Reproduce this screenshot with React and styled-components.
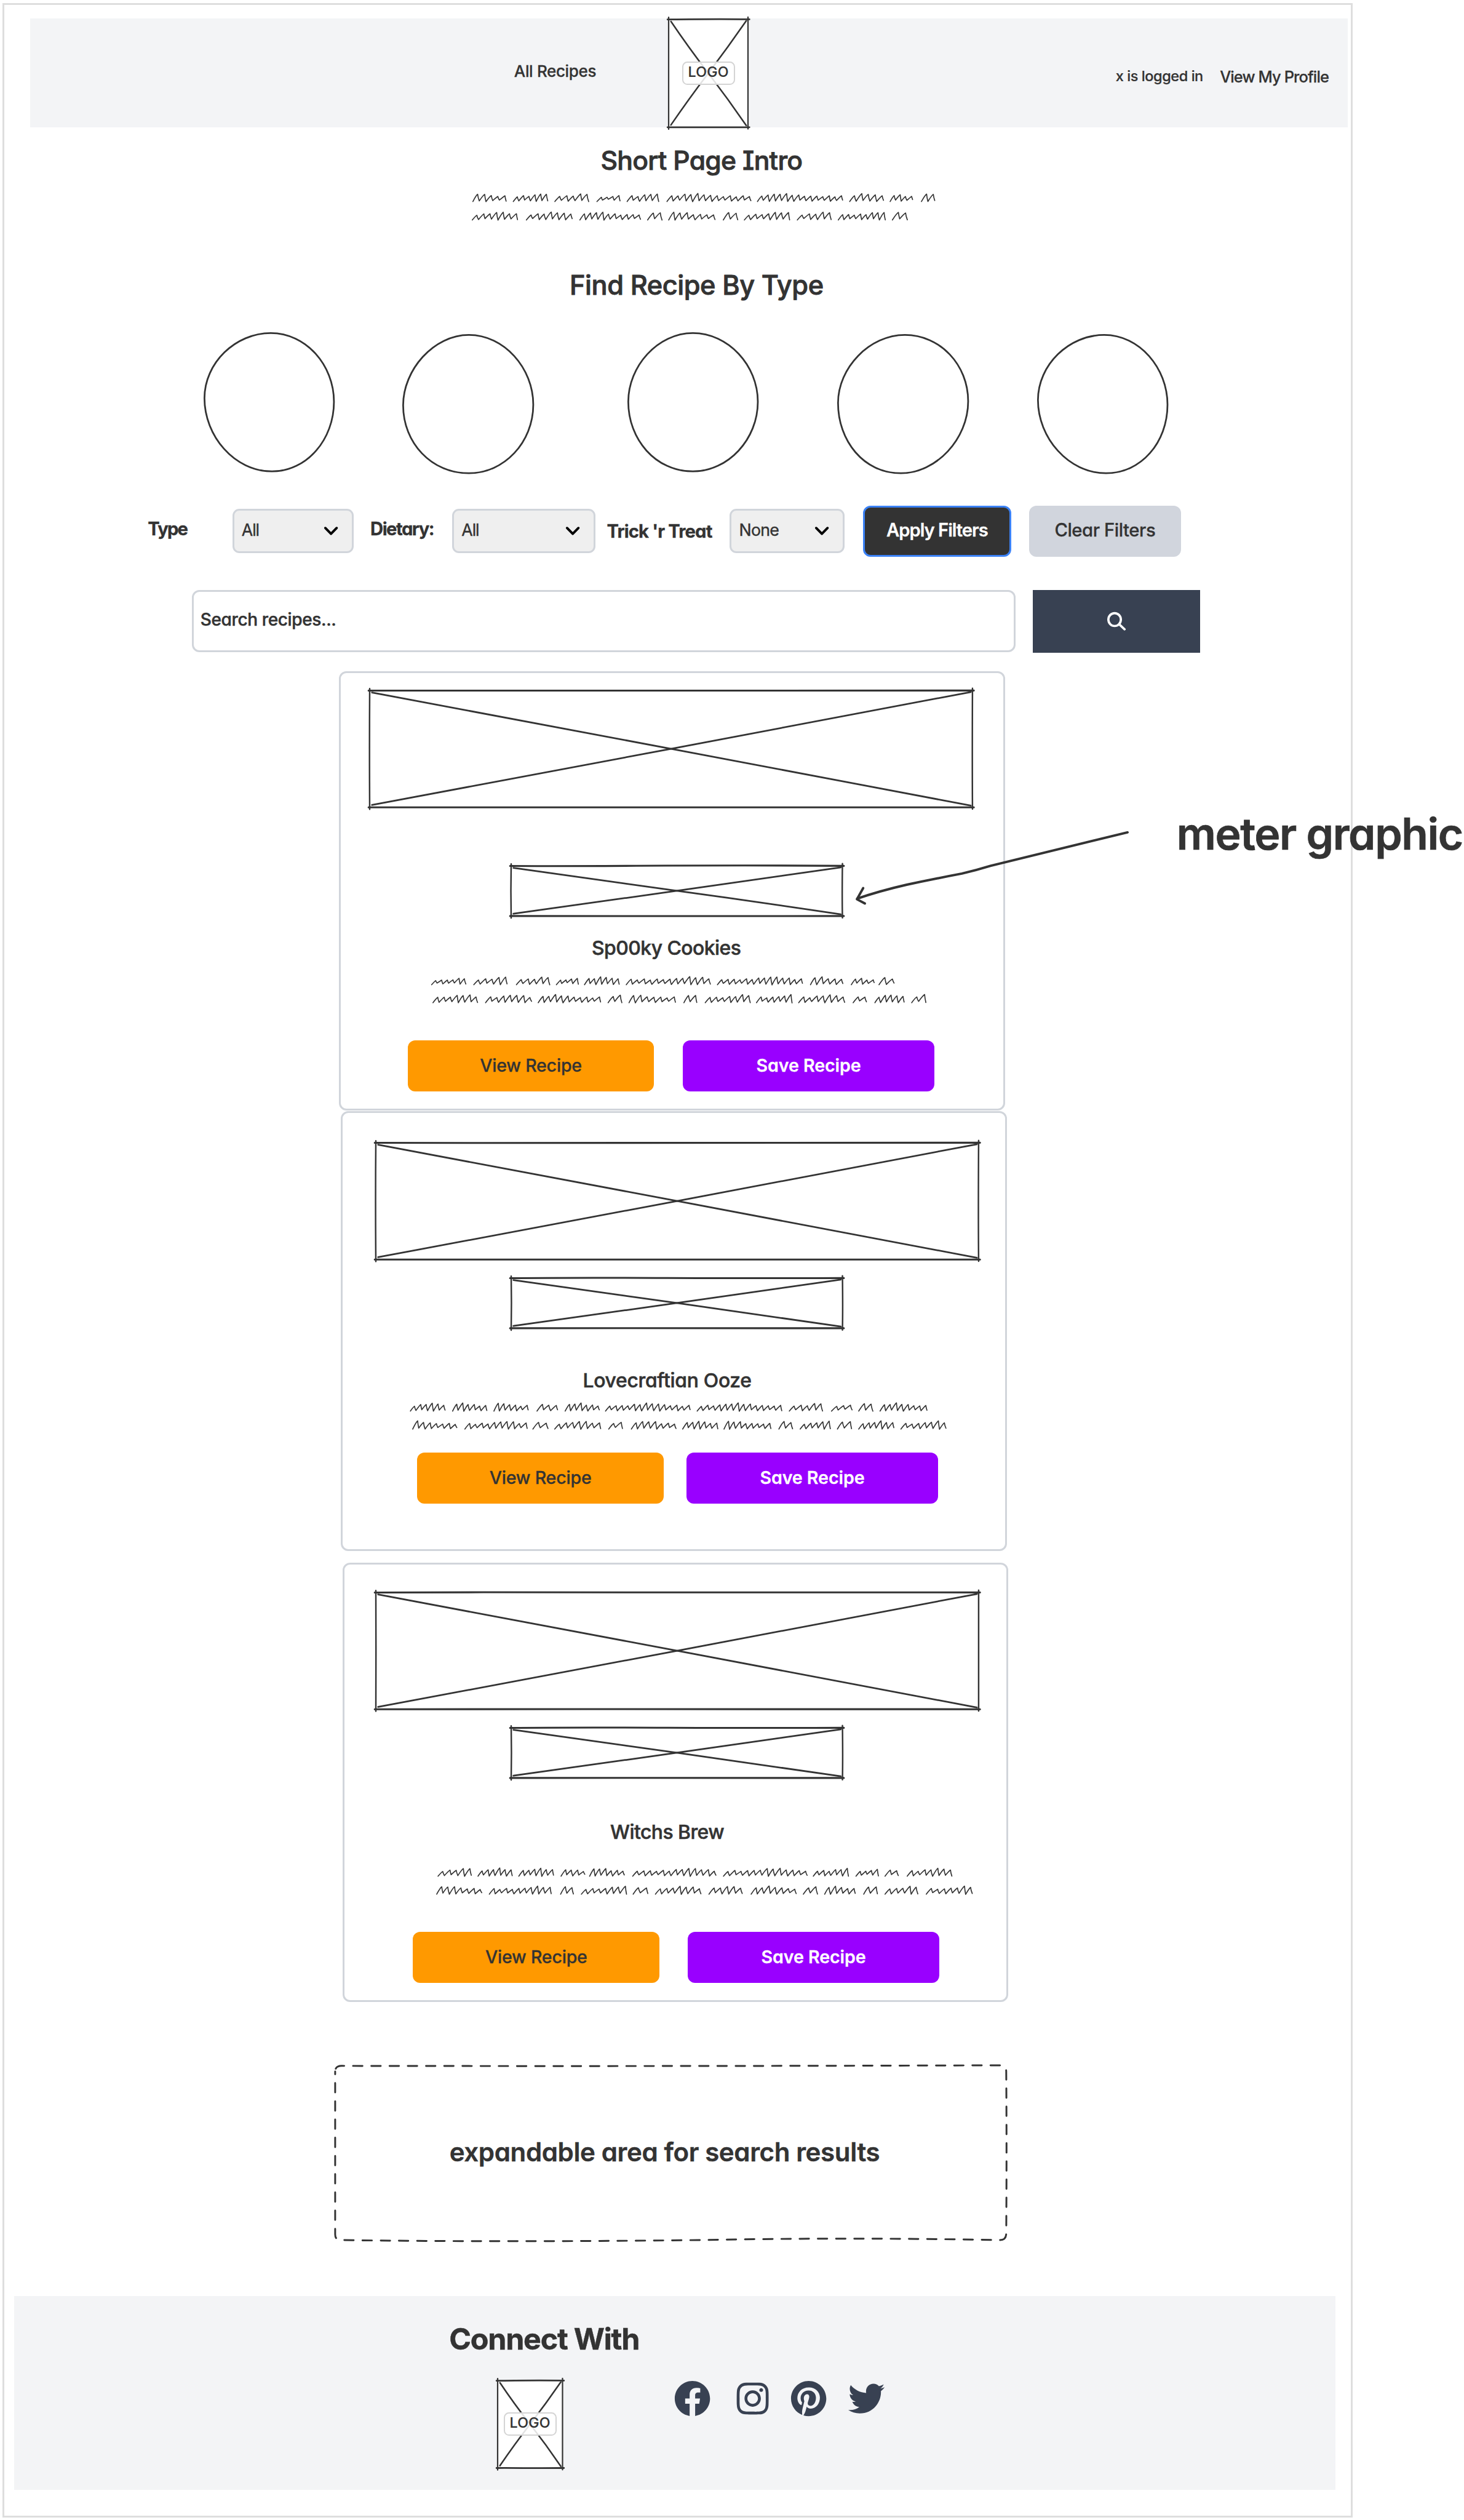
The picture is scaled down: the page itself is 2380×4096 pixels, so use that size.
import React from 'react';
import styled, { createGlobalStyle } from 'styled-components';
import { FaFacebook, FaInstagram, FaPinterest, FaTwitter } from 'react-icons/fa';

const INK = '#333333';
const LINE = '#d1d5db';

// 1rem is ten design units
const GlobalStyle = createGlobalStyle`
  html { font-size: 9.2535px; }
  body { margin: 0; background: #fff; overflow: hidden; }
  *, *::before, *::after { box-sizing: border-box; }
`;

const Page = styled.main`
  position: relative;
  width: 257.2rem;
  height: 442.6rem;
  overflow: hidden;
  padding: 0.5rem 0 0 0.4rem;
  color: ${INK};
  font-family: Inter, "Liberation Sans", sans-serif;
  font-feature-settings: "cv11", "cv08";
`;

const Frame = styled.div`
  width: 237.2rem;
  height: 441.7rem;
  border: 3px solid #dedede;
  display: flex;
  flex-direction: column;
  align-items: flex-start;
`;

const Text = styled.span`
  display: block;
  flex: none;
  white-space: nowrap;
  font-size: ${(p) => p.$size}rem;
  font-weight: ${(p) => p.$weight || 500};
  letter-spacing: ${(p) => p.$track || 0}em;
  line-height: ${(p) => p.$line || 4}rem;
  margin: ${(p) => p.$m || '0'};
  -webkit-text-stroke: ${(p) => p.$swell || 0.01}em currentColor;
`;

/* ---------- header ---------- */

const Header = styled.header`
  flex: none;
  display: grid;
  grid-template-columns: 112.16rem 13.94rem 1fr;
  width: 231.5rem;
  height: 19.05rem;
  margin: 2.45rem 0 0 4.6rem;
  background: #f3f4f6;
`;

const Nav = styled.nav`
  display: flex;
  align-items: flex-start;
  padding: 7.2rem 0 0 85rem;
`;

const Account = styled.div`
  display: flex;
  align-items: flex-start;
  justify-content: flex-end;
  gap: 2.95rem;
  padding: 8.05rem 3.4rem 0 0;
`;

const PlaceholderBox = styled.div`
  position: relative;
  flex: none;
  width: ${(p) => p.$w / 10}rem;
  height: ${(p) => p.$h / 10}rem;
  margin: ${(p) => p.$m || '0'};
`;

const Sketch = styled.svg`
  display: block;
  width: 100%;
  height: 100%;
  overflow: visible;
`;

const Badge = styled.span`
  position: absolute;
  left: 50%;
  top: 50%;
  transform: translate(-50%, -50%);
  display: flex;
  align-items: center;
  justify-content: center;
  width: 9.3rem;
  height: 4.1rem;
  padding-bottom: 0.35rem;
  border: 0.25rem solid #d4d4d4;
  border-radius: 0.9rem;
  background: rgba(255, 255, 255, 0.86);
`;

function Placeholder({ w, h, m, bend = 1, stroke = 3.3, label }) {
  const b = bend * 1.6;
  return (
    <PlaceholderBox $w={w} $h={h} $m={m}>
      <Sketch viewBox={`0 0 ${w} ${h}`} preserveAspectRatio="none" fill="none" stroke={INK} strokeWidth={stroke} strokeLinecap="round">
        <rect x="0" y="0" width={w} height={h} fill="#fff" stroke="none" />
        <path d={`M-2 0.6 C${w * 0.3} ${b} ${w * 0.55} ${-b} ${w + 2.5} 0.4`} />
        <path d={`M-2 ${h} C${w * 0.35} ${h - b * 0.4} ${w * 0.55} ${h + b} ${w + 2.5} ${h}`} />
        <path strokeWidth={stroke * 0.8} d={`M0 -3 Q${-b * 0.6} ${h * 0.5} 0 ${h + 3.5}`} />
        <path strokeWidth={stroke * 0.8} d={`M${w} -3.5 Q${w - b * 0.5} ${h * 0.6} ${w} ${h + 3}`} />
        <path strokeWidth={stroke * 0.9} d={`M4 4 Q${w * 0.25} ${h * 0.25 + 2 + b * 0.2} ${w / 2} ${h / 2} T${w - 3} ${h - 3}`} />
        <path strokeWidth={stroke * 0.9} d={`M4 ${h - 4} Q${w * 0.25} ${h * 0.75 - 1.5 - b * 0.2} ${w / 2} ${h / 2} T${w - 3} 3`} />
      </Sketch>
      {label && (
        <Badge>
          <Text $size={2.5} $track={0.012} $line={3}>{label}</Text>
        </Badge>
      )}
    </PlaceholderBox>
  );
}

/* ---------- scribbled copy ---------- */

// A word is [start, end, peak, height]: peak says where its tall strokes are.
const U = 1.2544;

const SquiggleBox = styled.div`
  flex: none;
  width: ${(p) => p.$w / 10}rem;
  height: 5.4rem;
  margin: ${(p) => p.$m || '0'};
`;

function wordPath([a, b, peak = 0.5, height = 1], base, seed) {
  const x0 = a / U;
  const x1 = b / U;
  const n = Math.max(2, Math.round((x1 - x0) / 11));
  const step = (x1 - x0) / n;
  let d = `M${x0.toFixed(1)} ${base.toFixed(1)}`;
  for (let i = 0; i < n; i += 1) {
    const t = i / (n - 1);
    const near = Math.exp(-(((t - peak) * Math.min(n, 11)) ** 2) / 5);
    const jitter = Math.sin(seed * 7.3 + i * 2.7);
    const tall = (9.2 + 4.2 * near + jitter) * height;
    const px = x0 + step * (i + 0.74 + jitter * 0.04);
    const bx = x0 + step * (i + 0.95);
    const py = base - tall;
    const by = base - 1.6 + near * 0.9 + Math.sin(seed * 3.1 + i * 1.9) * 1.1 - (1 - height) * 6;
    d += ` Q${(px - step * 0.22).toFixed(1)} ${(py + 1.6).toFixed(1)} ${px.toFixed(1)} ${py.toFixed(1)}`;
    d += ` Q${(px + step * 0.05).toFixed(1)} ${((py + by) / 2).toFixed(1)} ${bx.toFixed(1)} ${by.toFixed(1)}`;
  }
  return d;
}

function Squiggle({ lines, start, w, m, pitch = 31.6 }) {
  return (
    <SquiggleBox $w={w} $m={m}>
      <Sketch viewBox={`${start} 0 ${w} 54`} fill="none" stroke={INK} strokeWidth="1.8" strokeLinejoin="round" strokeLinecap="round">
        {lines.map((words, row) =>
          words.map((word, i) => (
            <path key={`${row}-${i}`} d={wordPath(word, 16.8 + row * pitch, i + row * 13 + words.length)} />
          ))
        )}
      </Sketch>
    </SquiggleBox>
  );
}

const toUnits = (words) => words.map(([a, b, ...rest]) => [a * U, b * U, ...rest]);

const INTRO = [
  toUnits([[830, 889, 0], [901, 962, 0.9], [974, 1034, 1], [1048, 1089, 1, 0.75], [1101, 1157, 0.9], [1171, 1319, 0.3], [1330, 1480, 0.25], [1492, 1552, 0.4], [1563, 1603, 0.2, 0.85], [1618, 1642, 0.5]]),
  toUnits([[829, 909, 0.6], [924, 1005, 0.6], [1018, 1125, 0.25], [1137, 1163, 1], [1174, 1256, 0.1], [1270, 1296, 0.3], [1307, 1387, 0.8], [1400, 1460, 0.9], [1472, 1555, 0.9], [1567, 1594, 0.6]]),
];

/* ---------- category circles ---------- */

const Circles = styled.div`
  flex: none;
  display: flex;
  align-items: flex-start;
  height: 25rem;
  margin: 5.15rem 0 0 35rem;
`;

const CircleBox = styled.div`
  flex: none;
  width: ${(p) => p.$w / 10}rem;
  height: 24.6rem;
  margin: ${(p) => p.$drop / 10}rem ${(p) => p.$gap / 10}rem 0 0;
`;

const CIRCLES = [
  { w: 230.5, gap: 118.9, drop: 0, top: 118, right: 122, bottom: 120, left: 116 },
  { w: 231.6, gap: 164.4, drop: 4, top: 117, right: 124, bottom: 117, left: 125 },
  { w: 230.6, gap: 137.4, drop: 0, top: 115, right: 122, bottom: 115, left: 122 },
  { w: 231.6, gap: 120.4, drop: 4, top: 119, right: 118, bottom: 112, left: 121 },
  { w: 230.6, gap: 0, drop: 4, top: 118, right: 124, bottom: 121, left: 116 },
];

function Circle({ w, gap, drop, top, right, bottom, left }) {
  const x1 = w - 1.5;
  const y1 = 244.5;
  const d = `M${top} 1.5 C${top + 62} 1.5 ${x1} ${right - 64} ${x1} ${right} C${x1} ${right + 66} ${bottom + 62} ${y1} ${bottom} ${y1} C${bottom - 66} ${y1} 1.5 ${left + 66} 1.5 ${left} C1.5 ${left - 62} ${top - 62} 1.5 ${top} 1.5 Z`;
  return (
    <CircleBox $w={w} $gap={gap} $drop={drop}>
      <Sketch viewBox={`0 0 ${w} 246`} fill="none" stroke={INK} strokeWidth="3">
        <path d={d} />
      </Sketch>
    </CircleBox>
  );
}

/* ---------- filters and search ---------- */

const Filters = styled.form`
  flex: none;
  display: flex;
  align-items: center;
  height: 8.94rem;
  margin: 5.5rem 0 0 25.25rem;
`;

const FilterLabel = styled.label`
  flex: none;
  width: ${(p) => p.$w / 10}rem;
  margin-left: ${(p) => (p.$gap || 0) / 10}rem;
  padding-bottom: ${(p) => (p.$lift || 0) / 10}rem;
`;

const SelectBox = styled.div`
  flex: none;
  display: flex;
  align-items: center;
  justify-content: space-between;
  width: ${(p) => p.$w / 10}rem;
  height: 7.8rem;
  padding: 0 2.5rem 0 1.3rem;
  border: 3px solid ${LINE};
  border-radius: 1.2rem;
  background: #efefef;
`;

const Chevron = styled.svg`
  display: block;
  width: 2.4rem;
  height: 1.5rem;
  overflow: visible;
`;

function Select({ w, value, track }) {
  return (
    <SelectBox $w={w}>
      <Text $size={2.89} $weight={400} $track={track} $swell={0.016} $m="-0.3rem 0 0">{value}</Text>
      <Chevron viewBox="0 0 24 15" fill="none" stroke="#000" strokeWidth="4.2" strokeLinecap="round" strokeLinejoin="round">
        <path d="M2 2.4 L12 12.6 L22 2.4" />
      </Chevron>
    </SelectBox>
  );
}

const tones = {
  dark: `background: ${INK}; color: #fff; border: 3px solid #3b82f6;`,
  muted: `background: #d1d5dd; color: ${INK}; border: 0;`,
  orange: `background: #ff9900; color: ${INK}; border: 0;`,
  purple: `background: #9900ff; color: #fff; border: 0;`,
};

const Button = styled.button`
  flex: none;
  display: flex;
  align-items: center;
  justify-content: center;
  width: ${(p) => p.$w / 10}rem;
  height: ${(p) => (p.$h || 89) / 10}rem;
  margin: 0 0 0 ${(p) => (p.$gap || 0) / 10}rem;
  padding: 0 0 0.3rem;
  border-radius: 1.3rem;
  font-family: inherit;
  font-feature-settings: inherit;
  ${(p) => tones[p.$tone]}
`;

const SearchRow = styled.form`
  flex: none;
  display: flex;
  gap: 3rem;
  height: 11.05rem;
  margin: 5.9rem 0 0 32.95rem;
`;

const SearchField = styled.div`
  display: flex;
  align-items: center;
  width: 144.75rem;
  height: 10.85rem;
  padding: 0 0 0.35rem 1.2rem;
  border: 3px solid ${LINE};
  border-radius: 1.3rem;
  background: #fff;
`;

const SearchButton = styled.button`
  display: flex;
  align-items: center;
  justify-content: center;
  width: 29.4rem;
  height: 11.05rem;
  padding: 0 0 0 0.2rem;
  border: 0;
  background: #384152;
`;

const SearchGlyph = styled.svg`
  display: block;
  width: 3.3rem;
  height: 3.2rem;
  overflow: visible;
`;

/* ---------- recipe cards ---------- */

const Card = styled.article`
  flex: none;
  display: flex;
  flex-direction: column;
  align-items: flex-start;
  width: 117rem;
  height: 77.25rem;
  margin: ${(p) => p.$m};
  border: 3px solid ${LINE};
  border-radius: 1.3rem;
  background: #fff;
`;

const Actions = styled.div`
  flex: none;
  display: flex;
  gap: ${(p) => p.$gap}rem;
  margin: ${(p) => p.$m};
`;

const RECIPES = [
  {
    title: 'Sp00ky Cookies', track: -0.0159, m: '3.15rem 0 0 58.82rem', start: 18.2, bends: [0.7, 1],
    imageM: '3.1rem 0 0 5.08rem', meterM: '10.2rem 0 0 29.94rem', titleM: '3.6rem 0 0 44.1rem', copyM: '2.8rem 0 0',
    actionsM: '6.1rem 0 0 11.75rem', actionsGap: 5.02,
    lines: [
      [[223, 299, 1, 0.85], [316, 390, 1], [410, 484, 1], [498, 547, 0.9, 0.8], [560, 637, 0.5], [652, 838, 0.8], [853, 1041, 0.65], [1058, 1130, 0.1], [1148, 1199, 0.2, 0.8], [1209, 1243, 0, 0.9]],
      [[226, 325, 0.7], [342, 444, 0.6], [458, 596, 0.25], [612, 643, 1], [658, 761, 0], [779, 808, 0.2], [826, 926, 0.9], [939, 1018, 1], [1032, 1134, 0.65], [1152, 1182, 0.5, 0.8], [1200, 1265, 0.5], [1281, 1313, 1]],
    ],
  },
  {
    title: 'Lovecraftian Ooze', track: -0.0086, m: '0.05rem 0 0 59.2rem', start: 22, bends: [1, -1],
    imageM: '5.25rem 0 0 5.77rem', meterM: '3.2rem 0 0 29.55rem', titleM: '7.1rem 0 0 42.15rem', copyM: '1.75rem 0 0',
    actionsM: '3.6rem 0 0 13.05rem', actionsGap: 3.98,
    lines: [
      [[177, 254, 0.6], [270, 346, 0.2], [361, 437, 0.1], [456, 502, 0.3, 0.85], [518, 594, 0.3], [607, 794, 0.5], [809, 996, 0.45], [1012, 1086, 1], [1105, 1151, 1, 0.8], [1165, 1197, 0.7], [1212, 1316, 0.3]],
      [[182, 280, 0], [297, 435, 0.65], [447, 481, 0.2, 0.9], [495, 597, 0.55], [614, 645, 0.6, 0.85], [664, 763, 0.3], [777, 855, 0.4], [868, 972, 0.1], [989, 1020, 0.2], [1036, 1103, 0.9], [1118, 1150, 0.3], [1165, 1243, 0.6], [1258, 1358, 0.8]],
    ],
  },
  {
    title: 'Witchs Brew', track: -0.0166, m: '2.05rem 0 0 59.42rem', start: 24.5, bends: [-0.5, -1],
    imageM: '4.92rem 0 0 5.52rem', meterM: '3.23rem 0 0 29.3rem', titleM: '7.5rem 0 0 46.75rem', copyM: '4.05rem 0 0',
    actionsM: '6.1rem 0 0 12.1rem', actionsGap: 4.94,
    lines: [
      [[237, 311, 0.9], [325, 401, 0.6], [415, 492, 0.6], [508, 561, 0.3, 0.85], [571, 648, 0.2], [666, 850, 0.7], [866, 1051, 0.6], [1064, 1142, 1], [1158, 1208, 1, 0.85], [1222, 1252, 0.6, 0.8], [1271, 1370, 0.7]],
      [[234, 334, 0.2], [350, 487, 0.8], [507, 536, 0.2], [553, 653, 0.9], [667, 700, 0, 0.9], [716, 817, 0.6], [834, 908, 0.6], [927, 1027, 0.35], [1042, 1074, 1], [1089, 1157, 0.2], [1175, 1206, 0.2], [1222, 1295, 0.9], [1313, 1415, 0.9]],
    ],
  },
];

function RecipeCard({ r }) {
  return (
    <Card $m={r.m}>
      <Placeholder w={1059} h={205.5} m={r.imageM} bend={r.bends[0]} />
      <Placeholder w={582} h={88.5} m={r.meterM} bend={r.bends[1]} />
      <Text as="h3" $size={3.44} $swell={0.018} $track={r.track} $m={r.titleM}>{r.title}</Text>
      <Squiggle lines={r.lines} start={r.start} w={1160} m={r.copyM} />
      <Actions $m={r.actionsM} $gap={r.actionsGap}>
        <Button type="button" $tone="orange" $w={433}>
          <Text $size={3.09} $track={-0.0075}>View Recipe</Text>
        </Button>
        <Button type="button" $tone="purple" $w={442.5}>
          <Text $size={3.09} $weight={600} $track={-0.0021}>Save Recipe</Text>
        </Button>
      </Actions>
    </Card>
  );
}

/* ---------- results area, footer, note ---------- */

const Results = styled.section`
  position: relative;
  flex: none;
  display: flex;
  align-items: center;
  width: 118.3rem;
  height: 31rem;
  margin: 11rem 0 0 58rem;
  padding: 0 0 0.5rem 20.25rem;
`;

const DashedOutline = styled.svg`
  position: absolute;
  inset: 0;
  width: 100%;
  height: 100%;
  overflow: visible;
`;

const Footer = styled.footer`
  flex: none;
  width: 232.1rem;
  height: 34.05rem;
  margin: 9.65rem 0 0 1.8rem;
  padding: 4.45rem 0 0;
  background: #f3f4f6;
`;

const FooterRow = styled.div`
  display: flex;
  align-items: flex-start;
  padding: 4.3rem 0 0 84.9rem;
`;

const Socials = styled.div`
  display: flex;
  margin-left: 19.6rem;
  font-size: 6.4rem;
  color: #384152;

  svg { display: block; }
  svg:nth-child(2) { margin-left: 4.2rem; }
  svg:nth-child(3) { margin-left: 3.4rem; }
  svg:nth-child(4) { margin-left: 3.8rem; }
`;

const Note = styled.aside`
  position: absolute;
  left: 150rem;
  top: 142rem;
  display: flex;
  align-items: flex-start;
`;

const Arrow = styled.svg`
  display: block;
  flex: none;
  width: 48.4rem;
  height: 18rem;
  overflow: visible;
`;

export default function App() {
  return (
    <Page>
      <GlobalStyle />
      <Frame>
        <Header>
          <Nav>
            <Text $size={2.81} $track={-0.0133}>All Recipes</Text>
          </Nav>
          <Placeholder w={139.4} h={190} m="0.1rem 0 0" bend={0.3} stroke={3} label="LOGO" />
          <Account>
            <Text $size={2.54} $track={-0.0185}>x is logged in</Text>
            <Text $size={2.75} $track={-0.0349} $m="0.1rem 0 0">View My Profile</Text>
          </Account>
        </Header>

        <Text as="h1" $size={4.61} $swell={0.02} $track={-0.0165} $line={6} $m="2.85rem 0 0 104.8rem">Short Page Intro</Text>
        <Squiggle lines={INTRO} start={800} w={860} pitch={32.4} m="2.5rem 0 0 79.35rem" />
        <Text as="h2" $size={4.68} $swell={0.02} $track={-0.01} $line={6} $m="8.1rem 0 0 99.35rem">Find Recipe By Type</Text>

        <Circles>
          {CIRCLES.map((c, i) => <Circle key={i} {...c} />)}
        </Circles>

        <Filters>
          <FilterLabel $w={148.5} $lift={7}><Text $size={3.16} $weight={700} $track={-0.0634}>Type</Text></FilterLabel>
          <Select w={213.6} value="All" track={-0.04} />
          <FilterLabel $w={144} $gap={28.8} $lift={7}><Text $size={3.16} $weight={700} $track={-0.051}>Dietary:</Text></FilterLabel>
          <Select w={251.6} value="All" track={-0.04} />
          <FilterLabel $w={216} $gap={20}><Text $size={3.16} $weight={700} $track={-0.0304}>Trick 'r Treat</Text></FilterLabel>
          <Select w={202} value="None" track={-0.027} />
          <Button type="button" $tone="dark" $w={260.8} $h={89.4} $gap={31.7}>
            <Text $size={3.16} $weight={600} $track={-0.0354}>Apply Filters</Text>
          </Button>
          <Button type="button" $tone="muted" $w={266.6} $h={89.4} $gap={31.3}>
            <Text $size={3.16} $track={-0.0147}>Clear Filters</Text>
          </Button>
        </Filters>

        <SearchRow>
          <SearchField>
            <Text $size={3.03} $swell={0.016} $track={-0.013}>Search recipes...</Text>
          </SearchField>
          <SearchButton type="button" aria-label="Search">
            <SearchGlyph viewBox="0 0 33 32" fill="none" stroke="#fff" strokeWidth="4" strokeLinecap="round">
              <ellipse cx="13" cy="13" rx="11" ry="11.3" />
              <path d="M21.5 21.8 L30.5 30" />
            </SearchGlyph>
          </SearchButton>
        </SearchRow>

        {RECIPES.map((r) => <RecipeCard key={r.title} r={r} />)}

        <Results>
          <DashedOutline viewBox="0 0 1183 310" fill="none" stroke={INK} strokeWidth="3.2" strokeDasharray="16.5 15.5" strokeLinecap="round">
            <path d="M3 7 Q5 2 14 2 Q600 3 1168 1 Q1181 1 1181 12 Q1182 150 1181 296 Q1181 308 1170 308 Q900 303 640 308 Q300 312 12 308 Q2 308 2 298 Q2 150 2 12" />
          </DashedOutline>
          <Text $size={4.54} $weight={600} $track={-0.0087} $line={6}>expandable area for search results</Text>
        </Results>

        <Footer>
          <Text as="h2" $size={5.23} $weight={700} $track={-0.0251} $line={6} $m="0 0 0 76.4rem">Connect With</Text>
          <FooterRow>
            <Placeholder w={114} h={154} bend={0.3} stroke={3} label="LOGO" />
            <Socials>
              <FaFacebook />
              <FaInstagram />
              <FaPinterest />
              <FaTwitter />
            </Socials>
          </FooterRow>
        </Footer>
      </Frame>

      <Note>
        <Arrow viewBox="0 0 484 180" fill="none" stroke={INK} strokeWidth="4.2" strokeLinecap="round" strokeLinejoin="round">
          <path d="M481 42 L240 101 Q214 109 190 114.5 Q140 124 93 134 Q45 145 6 158.5" />
          <path d="M16.5 140 L5.5 159.5 L19.5 167" />
        </Arrow>
        <Text $size={7.7} $weight={600} $track={-0.0193} $line={9} $m="0 0 0 8.3rem">meter graphic</Text>
      </Note>
    </Page>
  );
}
